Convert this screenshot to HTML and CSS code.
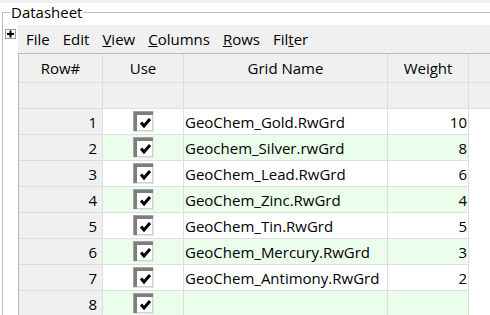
FILE: index.html
```html
<!DOCTYPE html>
<html lang="en">
<head>
  <meta charset="UTF-8">
  <meta name="viewport" content="width=device-width, initial-scale=1.0">
  <title>Datasheet</title>
  <link rel="stylesheet" href="styles.css">
</head>
<body>

  <div class="window-edge"></div>

  <fieldset class="datasheet">
    <legend>Datasheet</legend>
    <div class="sheet">
      <!-- expand / collapse box -->
      <div class="expander">
        <svg width="11" height="10" viewBox="0 0 11 10">
          <rect x="0.5" y="0.5" width="10" height="9" fill="#fff" stroke="#9a9a9a"/>
          <path d="M2 4H9V6H2Z M4.5 1.5H6.5V8.5H4.5Z" fill="#000"/>
        </svg>
      </div>

      <div class="panel">
        <ul class="menu">
          <li>File</li>
          <li>Edit</li>
          <li><u>V</u>iew</li>
          <li><u>C</u>olumns</li>
          <li><u>R</u>ows</li>
          <li>Fil<u>t</u>er</li>
        </ul>

        <table class="grid">
          <thead>
            <tr>
              <th class="col-row">Row#</th>
              <th class="col-use">Use</th>
              <th class="col-name">Grid Name</th>
              <th class="col-weight">Weight</th>
              <th class="col-rest"></th>
            </tr>
            <tr class="filter">
              <td></td>
              <td></td>
              <td></td>
              <td></td>
              <td class="rest"></td>
            </tr>
          </thead>
          <tbody id="gridRows"></tbody>
        </table>
      </div>
    </div>
  </fieldset>

  <script>
    const grids = [
      { name: 'GeoChem_Gold.RwGrd', weight: 10 },
      { name: 'Geochem_Silver.rwGrd', weight: 8 },
      { name: 'GeoChem_Lead.RwGrd', weight: 6 },
      { name: 'GeoChem_Zinc.RwGrd', weight: 4 },
      { name: 'GeoChem_Tin.RwGrd', weight: 5 },
      { name: 'GeoChem_Mercury.RwGrd', weight: 3 },
      { name: 'GeoChem_Antimony.RwGrd', weight: 2 },
      { name: '', weight: '' }
    ];

    const checkBox = `
      <svg class="check" width="21" height="21" viewBox="0 0 21 21">
        <rect width="21" height="21" fill="#fff"/>
        <path d="M0 0H21V1H1V21H0Z" fill="#a3a3a3"/>
        <path d="M1 1H20V4H4V20H1Z" fill="#7d7d7d"/>
        <path d="M0 20H21V21H0Z M20 0H21V21H20Z" fill="#e6e6e6"/>
        <path d="M4 19H20V20H4Z M19 4H20V20H19Z" fill="#d0d0d0"/>
        <path d="M8 11.5L11 15L17 8" stroke="#000" stroke-width="3" fill="none"/>
      </svg>`;

    const tbody = document.getElementById('gridRows');
    grids.forEach((grid, i) => {
      const row = document.createElement('tr');
      row.innerHTML = `
        <td class="num">${i + 1}</td>
        <td class="use">${checkBox}</td>
        <td class="name">${grid.name}</td>
        <td class="weight">${grid.weight}</td>
        <td class="rest"></td>
      `;
      tbody.appendChild(row);
    });
  </script>

</body>
</html>
```

FILE: styles.css
```css
body {
  margin: 0;
  font-family: "Open Sans", "Noto Sans", sans-serif;
  font-size: 15px;
  color: #000;
  background: #fff;
  overflow: hidden;
}
.window-edge {
  height: 3px;
  background: #f0f0f0;
}
.datasheet {
  margin: 0 0 0 2px;
  padding: 4px 0 0 0;
  min-width: 0;
  border: none;
  border-top: 1px solid #bdbdbd;
  border-left: 1px solid #bdbdbd;
}
.datasheet legend {
  margin-left: 7px;
  padding: 0 1px;
  line-height: 18px;
}
.sheet {
  display: flex;
}
.expander {
  width: 13px;
  padding: 4px 0 0 2px;
}
.expander svg {
  display: block;
}
.panel {
  flex: 1;
  min-width: 0;
}

/* Menu strip */
.menu {
  display: flex;
  align-items: center;
  height: 28px;
  margin: 0;
  padding: 0 0 0 1px;
  list-style: none;
  background: #f0f0f0;
}
.menu li {
  padding: 0 6px 0 7px;
}

/* Grid */
.grid {
  width: 100%;
  table-layout: fixed;
  border-collapse: separate;
  border-spacing: 0;
  border-top: 1px solid #b9b9b9;
  border-left: 1px solid #b9b9b9;
}
.grid th, .grid td {
  box-sizing: border-box;
  height: 26px;
  padding: 0;
  border-right: 1px solid #dedede;
  border-bottom: 1px solid #dedede;
  vertical-align: middle;
  white-space: nowrap;
  overflow: hidden;
}
.grid th {
  height: 29px;
  font-weight: normal;
  text-align: center;
  background: #f0f0f0;
}
.col-row { width: 84px; }
.col-use { width: 81px; }
.col-name { width: 204px; }
.col-weight { width: 81px; }
.grid .col-rest, .grid .rest {
  border-right: none;
}
.filter td {
  background: #f0f0f0;
}
.grid td.num {
  text-align: right;
  padding-right: 5px;
  background: #f0f0f0;
}
.grid td.use {
  text-align: center;
}
.grid td.name {
  padding-left: 1px;
}
.grid td.weight {
  text-align: right;
  padding-right: 1px;
}
tbody tr:nth-child(even) td {
  background: #ebfdeb;
}
tbody tr td.num {
  background: #f0f0f0;
}
tbody tr td.rest {
  background: #fff;
  border-bottom: none;
}
.check {
  display: block;
  margin: 0 auto;
}
```
